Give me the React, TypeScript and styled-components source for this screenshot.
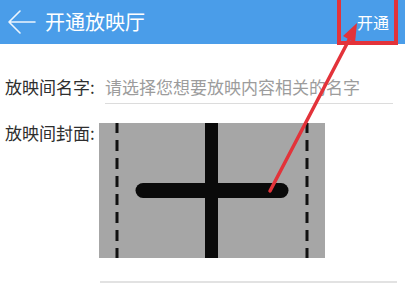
import React from "react";
import styled, { createGlobalStyle } from "styled-components";

const Global = createGlobalStyle`
  html, body { margin: 0; padding: 0; background: #ffffff; }
  body { font-family: "Noto Sans CJK SC", "Noto Sans", sans-serif; overflow: hidden; }
`;

const Page = styled.div`
  position: relative;
  width: 405px;
  height: 285px;
  overflow: hidden;
  background: #fff;
`;

const Header = styled.header`
  height: 44px;
  background: #4a9de9;
  display: flex;
  align-items: center;
  padding: 0 16px 0 7px;
  color: #fff;
`;

const BackIcon = styled.svg`
  width: 30px;
  height: 24px;
  flex: none;
  margin-right: 8px;
`;

const Title = styled.h1`
  margin: 0;
  font-size: 20px;
  font-weight: 400;
  line-height: 24px;
  flex: 1;
`;

const Action = styled.span`
  font-size: 16px;
  line-height: 20px;
`;

const Form = styled.div`
  padding: 0 12px 0 5px;
`;

const Row = styled.div<{ $labelWidth: number; $top: number }>`
  display: grid;
  grid-template-columns: ${(p) => p.$labelWidth}px 1fr;
  align-items: start;
  margin-top: ${(p) => p.$top}px;
`;

const Label = styled.label`
  font-size: 17px;
  line-height: 20px;
  color: #2e2e2e;
  white-space: nowrap;
`;

const Field = styled.div`
  font-size: 17px;
  line-height: 20px;
  color: #9c9c9c;
  padding-bottom: 6px;
  border-bottom: 1px solid #dcdcdc;
  white-space: nowrap;
`;

const Cover = styled.div`
  width: 226px;
  height: 135px;
  background: #a6a6a6;
`;

const BottomLine = styled.div`
  margin: 23px -4px 0 95px;
  height: 2px;
  background: #e2e2e2;
`;

const Overlay = styled.svg`
  position: absolute;
  left: 0;
  top: 0;
  width: 405px;
  height: 285px;
  pointer-events: none;
`;

export default function App() {
  return (
    <Page>
      <Global />
      <Header>
        <BackIcon viewBox="0 0 30 24">
          <path d="M2 12 H28 M13 1 L2 12 L13 23" stroke="#fff" strokeWidth="1.6" fill="none" strokeLinecap="round" strokeLinejoin="round" opacity="0.9" />
        </BackIcon>
        <Title>开通放映厅</Title>
        <Action>开通</Action>
      </Header>
      <Form>
        <Row $labelWidth={100} $top={33}>
          <Label>放映间名字:</Label>
          <Field>请选择您想要放映内容相关的名字</Field>
        </Row>
        <Row $labelWidth={94} $top={19}>
          <Label>放映间封面:</Label>
          <Cover>
            <svg width="226" height="135" viewBox="0 0 226 135">
              <line x1="18" y1="-1" x2="18" y2="135" stroke="#111" strokeWidth="3" strokeDasharray="11 7" />
              <line x1="208" y1="-1" x2="208" y2="135" stroke="#111" strokeWidth="3" strokeDasharray="11 7" />
              <rect x="106" y="0" width="13" height="135" fill="#0a0a0a" />
              <line x1="44" y1="67.5" x2="182" y2="67.5" stroke="#0a0a0a" strokeWidth="15" strokeLinecap="round" />
            </svg>
          </Cover>
        </Row>
        <BottomLine />
      </Form>
      <Overlay viewBox="0 0 405 285">
        <rect x="339" y="-5" width="57" height="48" fill="none" stroke="#e3333a" strokeWidth="4" />
        <line x1="270" y1="191" x2="351" y2="36" stroke="#e3333a" strokeWidth="3.5" strokeLinecap="round" />
        <polygon points="357,23 355,43 343,36" fill="#e3333a" />
      </Overlay>
    </Page>
  );
}
